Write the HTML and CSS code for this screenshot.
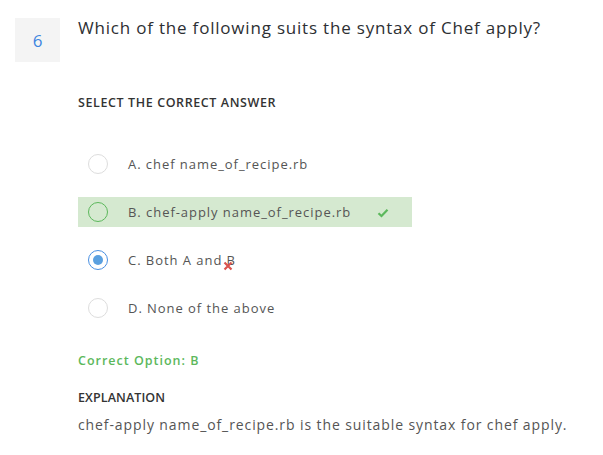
FILE: index.html
```html
<!DOCTYPE html>
<html>
<head>
<meta charset="utf-8">
<link rel="stylesheet" href="styles.css">
</head>
<body>
<div class="page">
  <div class="head">
    <div class="num">6</div>
    <div class="qtext">Which of the following suits the syntax of Chef apply?</div>
  </div>
  <div class="body">
    <div class="label">SELECT THE CORRECT ANSWER</div>
    <div class="options">
      <div class="opt"><span class="radio"></span><span class="otext">A. chef name_of_recipe.rb</span></div>
      <div class="opt correct"><span class="radio"></span><span class="otext">B. chef-apply name_of_recipe.rb</span>
        <svg class="check" width="12" height="10" viewBox="0 0 12 10"><path d="M1.5 5.2 L4.5 8 L10.5 1.8" fill="none" stroke="#5cb85c" stroke-width="2.2"/></svg>
      </div>
      <div class="opt chosen"><span class="radio"></span><span class="otext">C. Both A and B
        <svg class="cross" width="10" height="10" viewBox="0 0 10 10"><path d="M1.5 1.5 L8.5 8.5 M8.5 1.5 L1.5 8.5" stroke="#d9534f" stroke-width="2.2"/></svg></span>
      </div>
      <div class="opt"><span class="radio"></span><span class="otext">D. None of the above</span></div>
    </div>
    <div class="correct-label">Correct Option: B</div>
    <div class="label expl-label">EXPLANATION</div>
    <div class="expl">chef-apply name_of_recipe.rb is the suitable syntax for chef apply.</div>
  </div>
</div>
</body>
</html>
```
FILE: styles.css
```css
html, body { margin: 0; padding: 0; background: #fff; }
body { font-family: "Open Sans", "Liberation Sans", sans-serif; color: #333; }
.page { padding: 18px 0 0 15px; }
.head { display: flex; align-items: flex-start; }
.num {
  width: 45px; height: 44px; background: #f4f4f4; color: #3d85e0;
  font-size: 17px; display: flex; align-items: center; justify-content: center;
  margin-right: 18px; flex: none;
}
.qtext { font-size: 17px; color: #2d2f33; line-height: 22px; margin-top: -1px; letter-spacing: 0.8px; }
.body { padding-left: 63px; }
.label { font-size: 12.5px; font-weight: 600; color: #333; letter-spacing: 0.6px; margin-top: 32px; line-height: 17px; }
.options { display: flex; flex-direction: column; gap: 18px; margin-top: 38px; }
.opt { display: flex; align-items: center; height: 30px; width: 334px; padding-left: 10px; box-sizing: border-box; position: relative; }
.radio { width: 18px; height: 18px; border: 1.5px solid #ddd; border-radius: 50%; flex: none; margin-right: 20px; display: flex; align-items: center; justify-content: center; }
.otext { font-size: 13px; color: #555; position: relative; letter-spacing: 0.95px; }
.correct { background: #d5e9d0; }
.correct .radio { border-color: #5cb85c; }
.check { position: absolute; left: 299px; top: 11px; }
.chosen .radio { border-color: #4a90e2; }
.chosen .radio::after { content: ""; width: 10px; height: 10px; background: #5aa0e0; border-radius: 50%; }
.cross { position: absolute; left: 95px; top: 10px; }
.correct-label { font-size: 12.5px; font-weight: 600; color: #5cb85c; margin-top: 29px; line-height: 17px; letter-spacing: 1px; }
.expl-label { margin-top: 20px; letter-spacing: 0.1px; }
.expl { font-size: 14px; color: #555; margin-top: 10px; line-height: 18px; letter-spacing: 0.9px; }
```
